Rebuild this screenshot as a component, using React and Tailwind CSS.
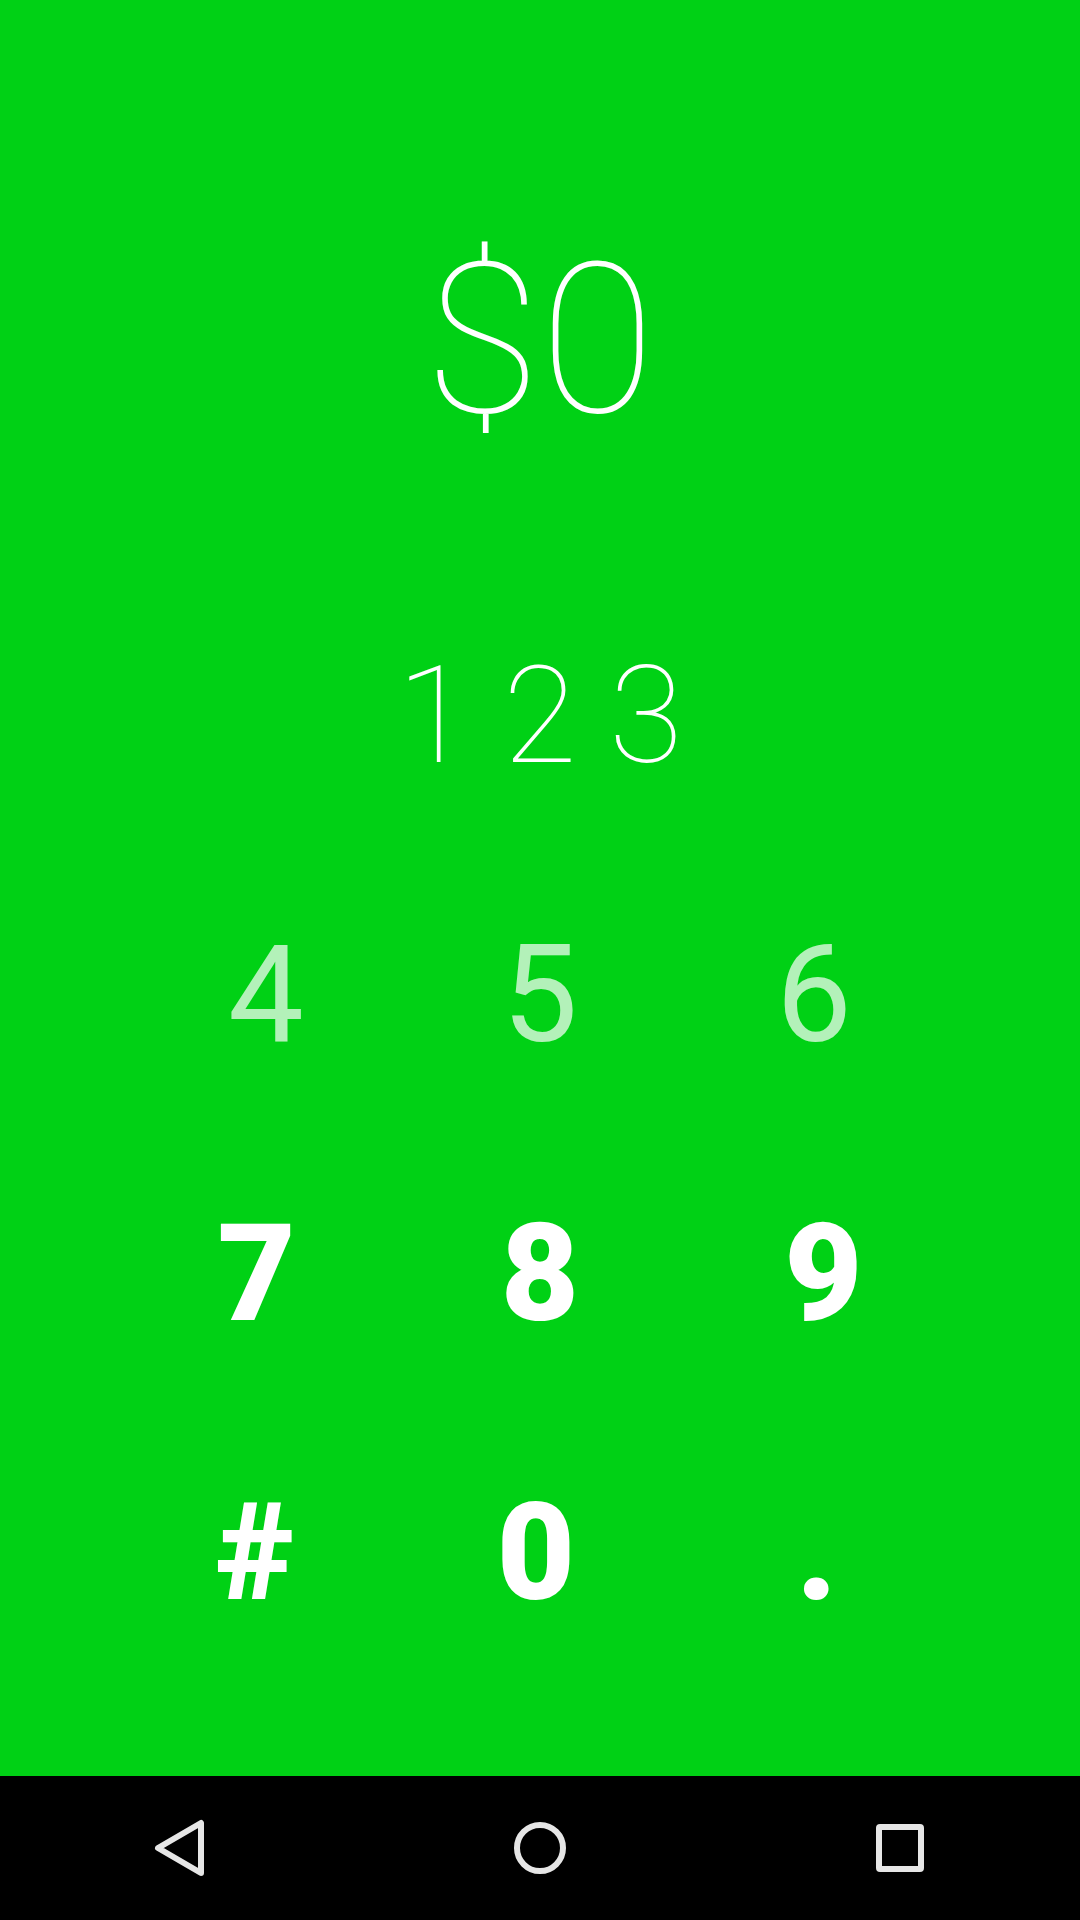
import React from "react";

const rows = [
  { keys: ["1", "2", "3"], style: "w-[318px] font-thin" },
  { keys: ["4", "5", "6"], style: "w-[822px] font-normal text-white/70" },
  { keys: ["7", "8", "9"], style: "w-[850px] font-black" },
  { keys: ["#", "0", "."], style: "w-[850px] pr-2 font-black" },
];

function NavButton({ label, children }) {
  return (
    <button type="button" aria-label={label} className="flex h-full items-center justify-center">
      <svg viewBox="0 0 72 72" className="size-18" fill="none" stroke="#e6e6e6" strokeWidth="6" strokeLinejoin="round">
        {children}
      </svg>
    </button>
  );
}

export default function App() {
  return (
    <div className="flex min-h-screen flex-col bg-[#00d115] font-['Roboto',sans-serif] text-white">
      <main className="flex grow flex-col">
        <output className="mt-[215px] block text-center text-[210px] leading-[250px] font-thin">$0</output>
        <div className="mt-[111px] flex flex-col items-center">
          {rows.map((r) => (
            <div
              key={r.keys[0]}
              className={`grid h-[279px] max-w-full grid-cols-3 items-center text-[135px] leading-[160px] ${r.style}`}
            >
              {r.keys.map((k) => (
                <button key={k} type="button" className="text-center">{k}</button>
              ))}
            </div>
          ))}
        </div>
      </main>
      <nav className="grid h-36 grid-cols-3 items-center bg-black">
        <NavButton label="Back">
          <path d="M14 36 L57 11 V61 Z" />
        </NavButton>
        <NavButton label="Home">
          <circle cx="36" cy="36" r="23" />
        </NavButton>
        <NavButton label="Recent apps">
          <rect x="15" y="15" width="42" height="42" rx="1" />
        </NavButton>
      </nav>
    </div>
  );
}
